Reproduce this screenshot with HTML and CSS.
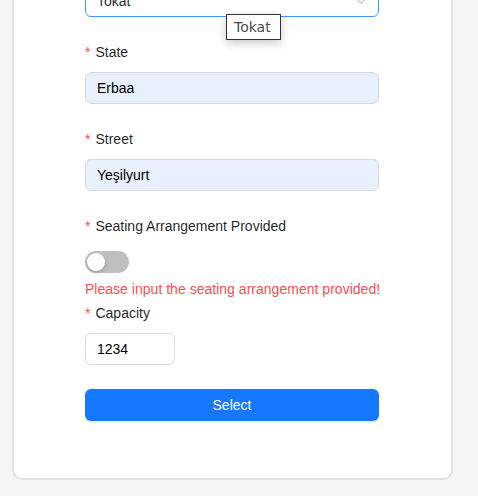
FILE: index.html
```html
<!DOCTYPE html>
<html lang="en">
<head>
<meta charset="utf-8">
<title>Form</title>
<link rel="stylesheet" href="styles.css">
</head>
<body>
<div class="card">
  <form class="form">
    <div class="item">
      <div class="select">
        <span class="select-value">Tokat</span>
        <svg class="chevron" width="12" height="12" viewBox="0 0 12 12"><path d="M2.2 4.4 L6 8.2 L9.8 4.4" fill="none" stroke="#bfbfbf" stroke-width="1.1"/></svg>
      </div>
    </div>
    <div class="item">
      <label class="label"><span class="req">*</span>State</label>
      <div class="input autofill">Erbaa</div>
    </div>
    <div class="item">
      <label class="label"><span class="req">*</span>Street</label>
      <div class="input autofill">Yeşilyurt</div>
    </div>
    <div class="item item-help">
      <label class="label"><span class="req">*</span>Seating Arrangement Provided</label>
      <div class="control">
        <span class="switch"><span class="handle"></span></span>
      </div>
      <div class="explain">Please input the seating arrangement provided!</div>
    </div>
    <div class="item">
      <label class="label"><span class="req">*</span>Capacity</label>
      <div class="input number">1234</div>
    </div>
    <div class="item item-submit">
      <button type="button" class="btn">Select</button>
    </div>
  </form>
</div>
<div class="tooltip">Tokat</div>
</body>
</html>
```

FILE: styles.css
```css
html, body {
  margin: 0;
  padding: 0;
  background: #f5f5f5;
  font-family: "Liberation Sans", Arial, sans-serif;
  font-size: 14px;
  color: rgba(0, 0, 0, 0.88);
}

.card {
  box-sizing: border-box;
  width: 441px;
  margin: -60px 0 0 12px;
  padding: 43px 72px 34px 71px;
  background: #fff;
  border: 2px solid #e1e1e1;
  border-radius: 10px;
}

.form {
  display: flex;
  flex-direction: column;
}

.item {
  display: flex;
  flex-direction: column;
  margin-bottom: 23px;
}

.item-help {
  margin-bottom: 0;
}

.item-submit {
  margin-top: 1px;
}

.label {
  height: 22px;
  line-height: 22px;
  margin-top: 1px;
  margin-bottom: 9px;
  color: rgba(0, 0, 0, 0.88);
  white-space: nowrap;
}

.req {
  color: #ff4d4f;
  margin-right: 5px;
}

.select {
  box-sizing: border-box;
  height: 32px;
  display: flex;
  align-items: center;
  justify-content: space-between;
  padding: 0 11px;
  border: 1px solid #4096ff;
  border-radius: 6px;
  background: #fff;
}

.select-value {
  color: rgba(0, 0, 0, 0.88);
}

.chevron {
  display: block;
}

.input {
  box-sizing: border-box;
  height: 32px;
  line-height: 30px;
  padding: 0 11px;
  border: 1px solid #d9d9d9;
  border-radius: 6px;
  background: #fff;
  color: #000;
}

.autofill {
  background: #e8f0fe;
}

.number {
  width: 90px;
}

.control {
  height: 32px;
  display: flex;
  align-items: center;
}

.switch {
  position: relative;
  display: block;
  width: 44px;
  height: 22px;
  border-radius: 11px;
  background: rgba(0, 0, 0, 0.25);
}

.handle {
  position: absolute;
  top: 2px;
  left: 2px;
  width: 18px;
  height: 18px;
  border-radius: 50%;
  background: #fff;
  box-shadow: 0 2px 4px rgba(0, 35, 11, 0.2);
}

.explain {
  height: 23px;
  line-height: 22px;
  color: #ff4d4f;
  white-space: nowrap;
  letter-spacing: 0.02px;
}

.btn {
  height: 32px;
  width: 100%;
  border: none;
  border-radius: 6px;
  background: #1677ff;
  color: #fff;
  font-family: "Liberation Sans", Arial, sans-serif;
  font-size: 14px;
  box-shadow: 0 2px 0 rgba(5, 145, 255, 0.1);
  padding: 0;
}

.tooltip {
  position: absolute;
  left: 226px;
  top: 14px;
  box-sizing: border-box;
  width: 55px;
  height: 26px;
  padding: 0 7px;
  line-height: 24px;
  border: 1px solid #333;
  background: #fff;
  color: #4a4a4a;
  font-family: "DejaVu Sans", sans-serif;
  font-size: 14px;
  white-space: nowrap;
  box-shadow: 0 3px 10px rgba(0, 0, 0, 0.22);
}
```
